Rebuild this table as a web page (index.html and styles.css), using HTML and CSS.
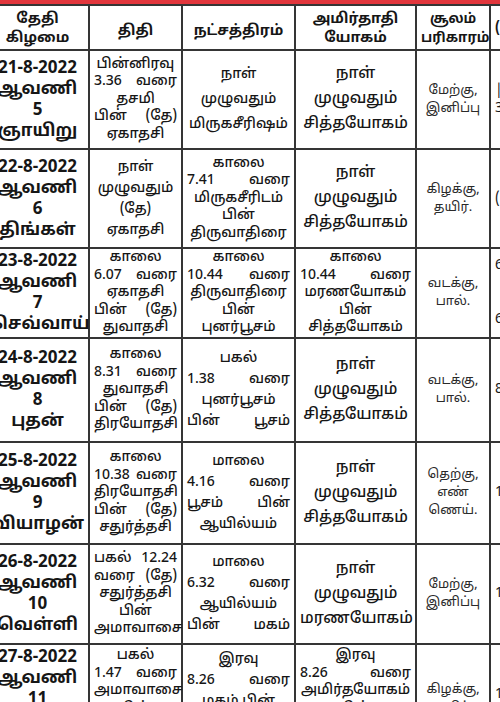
FILE: index.html
```html
<!DOCTYPE html>
<html lang="ta">
<head>
<meta charset="utf-8">
<link rel="stylesheet" href="styles.css">
</head>
<body>
<div class="topbar"></div>
<div class="cal">
  <div class="h">தேதி<br>கிழமை</div>
  <div class="h h1">திதி</div>
  <div class="h h1">நட்சத்திரம்</div>
  <div class="h">அமிர்தாதி<br>யோகம்</div>
  <div class="h hs">சூலம்<br>பரிகாரம்</div>
  <div class="h x">(ரா</div>

  <div class="date">21-8-2022<br>ஆவணி<br>5<br>ஞாயிறு</div>
  <div class="t l5">பின்னிரவு<div class="j">3.36 வரை</div>தசமி<div class="j">பின் (தே)</div>ஏகாதசி</div>
  <div class="t l3">நாள்<br>முழுவதும்<br>மிருகசீரிஷம்</div>
  <div class="y l3">நாள்<br>முழுவதும்<br>சித்தயோகம்</div>
  <div class="s">மேற்கு,<br>இனிப்பு</div>
  <div class="x">|<br>3</div>

  <div class="date">22-8-2022<br>ஆவணி<br>6<br>திங்கள்</div>
  <div class="t l4">நாள்<br>முழுவதும்<br>(தே)<br>ஏகாதசி</div>
  <div class="t l5">காலை<div class="j">7.41 வரை</div>மிருகசீரிடம்<br>பின்<br>திருவாதிரை</div>
  <div class="y l3">நாள்<br>முழுவதும்<br>சித்தயோகம்</div>
  <div class="s">கிழக்கு,<br>தயிர்.</div>
  <div class="x">(</div>

  <div class="date">23-8-2022<br>ஆவணி<br>7<br>செவ்வாய்</div>
  <div class="t l5">காலை<div class="j">6.07 வரை</div>ஏகாதசி<div class="j">பின் (தே)</div>துவாதசி</div>
  <div class="t l5">காலை<div class="j">10.44 வரை</div>திருவாதிரை<br>பின்<br>புனர்பூசம்</div>
  <div class="t l5 w">காலை<div class="j">10.44 வரை</div>மரணயோகம்<br>பின்<br>சித்தயோகம்</div>
  <div class="s">வடக்கு,<br>பால்.</div>
  <div class="x">6<br><br><br>6</div>

  <div class="date">24-8-2022<br>ஆவணி<br>8<br>புதன்</div>
  <div class="t l5">காலை<div class="j">8.31 வரை</div>துவாதசி<div class="j">பின் (தே)</div>திரயோதசி</div>
  <div class="t l4">பகல்<div class="j">1.38 வரை</div>புனர்பூசம்<div class="j">பின் பூசம்</div></div>
  <div class="y l3">நாள்<br>முழுவதும்<br>சித்தயோகம்</div>
  <div class="s">வடக்கு,<br>பால்.</div>
  <div class="x">8</div>

  <div class="date">25-8-2022<br>ஆவணி<br>9<br>வியாழன்</div>
  <div class="t l5">காலை<div class="j">10.38 வரை</div>திரயோதசி<div class="j">பின் (தே)</div>சதுர்த்தசி</div>
  <div class="t l4">மாலை<div class="j">4.16 வரை</div><div class="j">பூசம் பின்</div>ஆயில்யம்</div>
  <div class="y l3">நாள்<br>முழுவதும்<br>சித்தயோகம்</div>
  <div class="s">தெற்கு,<br>எண்<br>ணெய்.</div>
  <div class="x">1</div>

  <div class="date">26-8-2022<br>ஆவணி<br>10<br>வெள்ளி</div>
  <div class="t l5"><div class="j">பகல் 12.24</div><div class="j">வரை (தே)</div>சதுர்த்தசி<br>பின்<br>அமாவாசை</div>
  <div class="t l4">மாலை<div class="j">6.32 வரை</div>ஆயில்யம்<div class="j">பின் மகம்</div></div>
  <div class="y l3">நாள்<br>முழுவதும்<br>மரணயோகம்</div>
  <div class="s">மேற்கு,<br>இனிப்பு</div>
  <div class="x">1</div>

  <div class="date top">27-8-2022<br>ஆவணி<br>11<br>சனி</div>
  <div class="t l5 top">பகல்<div class="j">1.47 வரை</div>அமாவாசை<br>பின்<br>பிரதமை</div>
  <div class="t l4 top3">இரவு<div class="j">8.26 வரை</div>மகம் பின்<br>பூரம்</div>
  <div class="t l5 top w">இரவு<div class="j">8.26 வரை</div>அமிர்தயோகம்<br>பின்<br>சித்தயோகம்</div>
  <div class="s top2">கிழக்கு,<br>தயிர்.</div>
  <div class="x">1</div>
</div>
</body>
</html>
```
FILE: styles.css
```css
html, body {
  margin: 0;
  padding: 0;
  background: #ffffff;
  overflow: hidden;
  width: 500px;
  height: 702px;
}
body {
  font-family: "Noto Sans Tamil", "Latha", "Noto Sans", "DejaVu Sans", sans-serif;
  color: #161616;
}
.topbar {
  height: 4px;
  background: #e2363c;
}
.cal {
  display: grid;
  grid-template-columns: 101px 91px 111px 119px 72px 89px;
  grid-template-rows: 43px 97px 97px 88px 102px 100px 98px 100px;
  gap: 2px;
  padding: 2px;
  background: #353535;
  width: max-content;
  margin-left: -15px;
}
.cal > div {
  background: #ffffff;
  display: flex;
  flex-direction: column;
  justify-content: center;
  text-align: center;
  padding: 0 4px;
  min-width: 0;
}
.h {
  font-weight: 700;
  font-size: 14.5px;
  line-height: 19px;
  padding-top: 2px !important;
}
.h1 { padding-top: 8px !important; }
.hs { font-size: 13.5px; }
.date {
  font-weight: 700;
  font-size: 17px;
  line-height: 21px;
}
.t {
  font-size: 14px;
  font-weight: 500;
}
.y {
  font-size: 15.5px;
  font-weight: 500;
}
.w { font-size: 14px; }
.l5 { line-height: 17.5px; }
.l4 { line-height: 21px; }
.l3 { line-height: 25px; }
.s {
  font-size: 13px;
  line-height: 18px;
  font-weight: 400;
  color: #2a2a2a;
}
.top { justify-content: flex-start !important; padding-top: 2px !important; }
.top3 { justify-content: flex-start !important; padding-top: 4px !important; }
.top2 { justify-content: flex-start !important; padding-top: 36px !important; }
.j {
  text-align: justify;
  text-align-last: justify;
}
.cal > .x {
  text-align: left;
  align-items: flex-start;
  font-size: 14px;
  line-height: 18px;
  white-space: nowrap;
}
```
